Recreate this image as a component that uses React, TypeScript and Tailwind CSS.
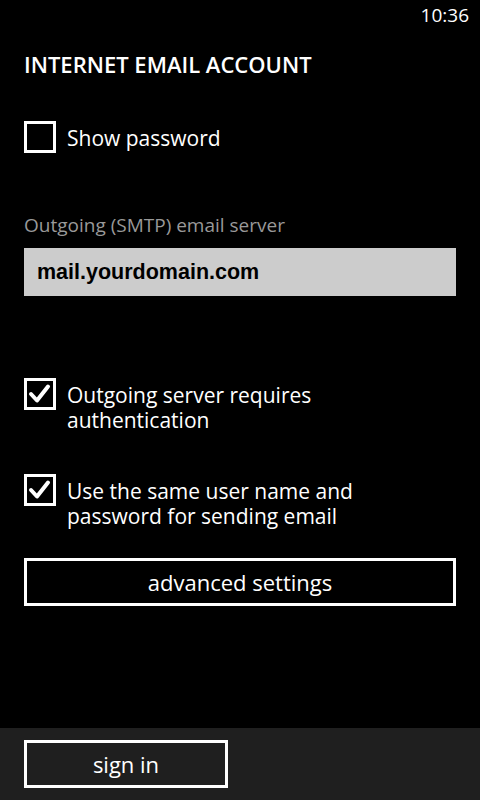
import type { ReactNode } from "react";

/** Windows Phone style email setup page: status bar, form, app bar with sign in. */

function CheckBox({ checked, children }: { checked?: boolean; children: ReactNode }) {
  return (
    <div className="flex items-start gap-[11px]">
      <div className="h-8 w-8 shrink-0 border-[3px] border-white">
        {checked && (
          <svg viewBox="0 0 26 26" className="h-[26px] w-[26px]">
            <polyline
              points="4,13 10,19.5 21,5.5"
              fill="none"
              stroke="white"
              strokeWidth="4"
              strokeLinecap="round"
              strokeLinejoin="round"
            />
          </svg>
        )}
      </div>
      <div className="pt-[5px] text-[21px] leading-[25px]">{children}</div>
    </div>
  );
}

export default function App() {
  return (
    <div className="flex h-[800px] w-[480px] flex-col bg-black font-['Open_Sans',sans-serif] text-white">
      <div className="flex h-8 justify-end pr-[11px] pt-[1px] text-[19px] leading-[28px]">10:36</div>

      <main className="flex flex-1 flex-col px-6">
        <h1 className="mt-[18px] text-[22px] font-semibold leading-[28px]">INTERNET EMAIL ACCOUNT</h1>

        <div className="mt-[43px]">
          <CheckBox>Show password</CheckBox>
        </div>

        <label className="mt-[60px] text-[19px] leading-[24px] text-[#999999]">Outgoing (SMTP) email server</label>
        <div className="mt-[11px] flex h-12 items-center bg-[#cccccc] px-[13px] font-['Liberation_Sans',Arial,sans-serif] text-[21.5px] font-bold text-black">
          mail.yourdomain.com
        </div>

        <div className="mt-[82px]">
          <CheckBox checked>
            Outgoing server requires
            <br />
            authentication
          </CheckBox>
        </div>

        <div className="mt-[41px]">
          <CheckBox checked>
            Use the same user name and
            <br />
            password for sending email
          </CheckBox>
        </div>

        <button className="mt-[29px] flex h-12 w-full items-center justify-center border-[3px] border-white text-[22px] leading-none">
          advanced settings
        </button>
      </main>

      <footer className="h-[72px] bg-[#1f1f1f] px-6 pt-3">
        <button className="flex h-12 w-[204px] items-center justify-center border-[3px] border-white text-[22px] leading-none">
          sign in
        </button>
      </footer>
    </div>
  );
}
